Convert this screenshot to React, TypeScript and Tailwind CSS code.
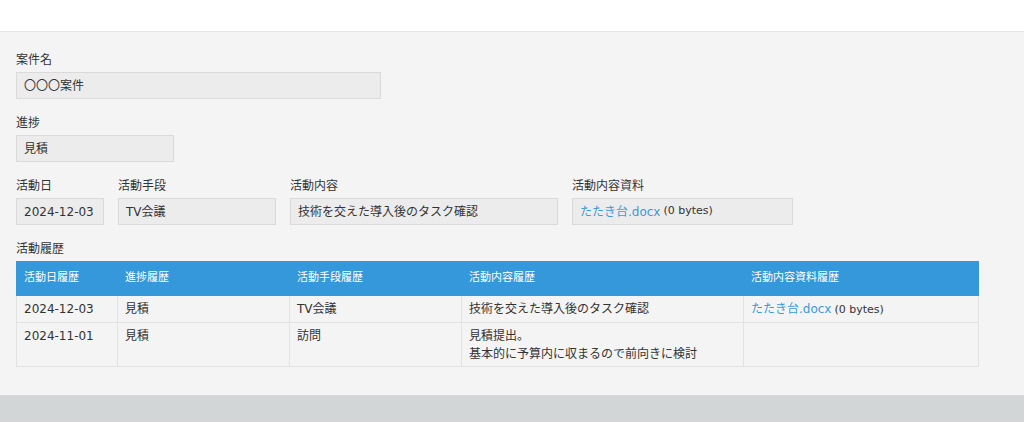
const font = {
  fontFamily: '"DejaVu Sans", "Noto Sans CJK JP", sans-serif',
};

function Label({ children }: { children: React.ReactNode }) {
  return (
    <div className="text-[12px] leading-[16px] text-[#333] mb-[4px]">
      {children}
    </div>
  );
}

function Field({
  className,
  children,
}: {
  className: string;
  children: React.ReactNode;
}) {
  return (
    <div
      className={`h-[27px] border border-[#dadada] bg-[#ececec] px-[7px] flex items-center text-[12px] text-[#333] whitespace-nowrap ${className}`}
    >
      {children}
    </div>
  );
}

function FileLink() {
  return (
    <>
      <a className="text-[#3b9ae1] text-[12px]">たたき台.docx</a>
      <span className="text-[11px] ml-[3px]">(0 bytes)</span>
    </>
  );
}

const rows = [
  {
    date: "2024-12-03",
    progress: "見積",
    method: "TV会議",
    content: ["技術を交えた導入後のタスク確認"],
    file: true,
  },
  {
    date: "2024-11-01",
    progress: "見積",
    method: "訪問",
    content: ["見積提出。", "基本的に予算内に収まるので前向きに検討"],
    file: false,
  },
];

export default function App() {
  return (
    <div className="w-[1024px] h-[422px] flex flex-col" style={font}>
      <div className="h-[32px] bg-white border-b border-[#e5e5e5]" />
      <div className="h-[363px] bg-[#f4f4f4] px-4 pt-[20px]">
        <Label>案件名</Label>
        <Field className="w-[365px]">〇〇〇案件</Field>

        <div className="mt-[16px]">
          <Label>進捗</Label>
          <Field className="w-[158px]">見積</Field>
        </div>

        <div className="mt-[16px] flex gap-[14px]">
          <div>
            <Label>活動日</Label>
            <Field className="w-[88px]">2024-12-03</Field>
          </div>
          <div>
            <Label>活動手段</Label>
            <Field className="w-[158px]">TV会議</Field>
          </div>
          <div>
            <Label>活動内容</Label>
            <Field className="w-[268px]">技術を交えた導入後のタスク確認</Field>
          </div>
          <div>
            <Label>活動内容資料</Label>
            <Field className="w-[221px]">
              <FileLink />
            </Field>
          </div>
        </div>

        <div className="mt-[16px]">
          <Label>活動履歴</Label>
          <table className="w-[962px] table-fixed border-collapse text-[12px] text-[#333]">
            <colgroup>
              <col className="w-[101px]" />
              <col className="w-[172px]" />
              <col className="w-[172px]" />
              <col className="w-[282px]" />
              <col className="w-[235px]" />
            </colgroup>
            <thead>
              <tr className="bg-[#3498db] text-white text-[11px] h-[34px] text-left">
                <th className="font-normal px-[7px] border border-[#3498db]">活動日履歴</th>
                <th className="font-normal px-[7px] border border-[#3498db]">進捗履歴</th>
                <th className="font-normal px-[7px] border border-[#3498db]">活動手段履歴</th>
                <th className="font-normal px-[7px] border border-[#3498db]">活動内容履歴</th>
                <th className="font-normal px-[7px] border border-[#3498db]">活動内容資料履歴</th>
              </tr>
            </thead>
            <tbody>
              {rows.map((r) => (
                <tr key={r.date} className="align-top leading-[18px]">
                  <td className="border border-[#e2e2e2] px-[7px] pt-[4px] pb-[3px]">{r.date}</td>
                  <td className="border border-[#e2e2e2] px-[7px] pt-[4px] pb-[3px]">{r.progress}</td>
                  <td className="border border-[#e2e2e2] px-[7px] pt-[4px] pb-[3px]">{r.method}</td>
                  <td className="border border-[#e2e2e2] px-[7px] pt-[4px] pb-[3px]">
                    {r.content.map((c) => (
                      <div key={c}>{c}</div>
                    ))}
                  </td>
                  <td className="border border-[#e2e2e2] px-[7px] pt-[4px] pb-[3px]">
                    {r.file && <FileLink />}
                  </td>
                </tr>
              ))}
            </tbody>
          </table>
        </div>
      </div>
      <div className="flex-1 bg-[#d3d6d6]" />
    </div>
  );
}
